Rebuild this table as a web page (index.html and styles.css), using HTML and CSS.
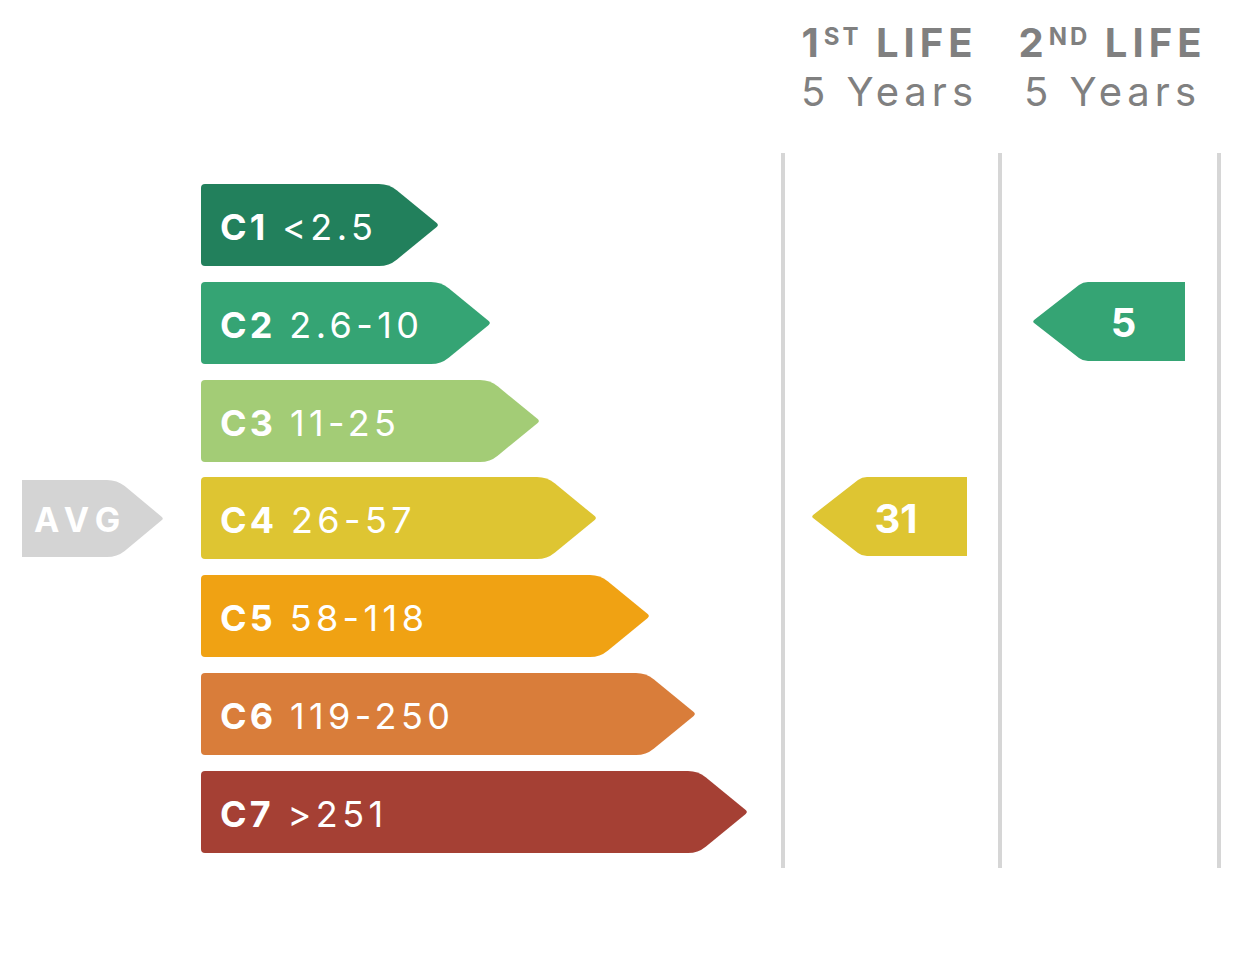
FILE: index.html
```html
<!DOCTYPE html>
<html lang="en">
<head>
<meta charset="utf-8">
<title>Energy classes</title>
<link rel="stylesheet" href="styles.css">
</head>
<body>
<div class="board">
  <div class="scale">
    <div class="avg">
      <svg class="avg-shape" viewBox="0 0 142 77" preserveAspectRatio="none"><path d="M0,0 H85 Q95,0 102.7,6.1 L139.6,36.7 Q142,38.5 139.6,40.3 L102.7,70.9 Q95,77 85,77 H0 Z"/></svg>
      <span class="avg-text">AVG</span>
    </div>
    <div class="bar c1"><div class="bar-body"><b>C1</b><span class="range">&lt;2.5</span></div><svg class="head" viewBox="0 0 62 82" preserveAspectRatio="none"><path d="M0,0 H2 Q12,0 19.7,6.3 L59.7,39.1 Q62,41 59.7,42.9 L19.7,75.7 Q12,82 2,82 H0 Z"/></svg></div>
    <div class="bar c2"><div class="bar-body"><b>C2</b><span class="range">2.6-10</span></div><svg class="head" viewBox="0 0 62 82" preserveAspectRatio="none"><path d="M0,0 H2 Q12,0 19.7,6.3 L59.7,39.1 Q62,41 59.7,42.9 L19.7,75.7 Q12,82 2,82 H0 Z"/></svg></div>
    <div class="bar c3"><div class="bar-body"><b>C3</b><span class="range">11-25</span></div><svg class="head" viewBox="0 0 62 82" preserveAspectRatio="none"><path d="M0,0 H2 Q12,0 19.7,6.3 L59.7,39.1 Q62,41 59.7,42.9 L19.7,75.7 Q12,82 2,82 H0 Z"/></svg></div>
    <div class="bar c4"><div class="bar-body"><b>C4</b><span class="range">26-57</span></div><svg class="head" viewBox="0 0 62 82" preserveAspectRatio="none"><path d="M0,0 H2 Q12,0 19.7,6.3 L59.7,39.1 Q62,41 59.7,42.9 L19.7,75.7 Q12,82 2,82 H0 Z"/></svg></div>
    <div class="bar c5"><div class="bar-body"><b>C5</b><span class="range">58-118</span></div><svg class="head" viewBox="0 0 62 82" preserveAspectRatio="none"><path d="M0,0 H2 Q12,0 19.7,6.3 L59.7,39.1 Q62,41 59.7,42.9 L19.7,75.7 Q12,82 2,82 H0 Z"/></svg></div>
    <div class="bar c6"><div class="bar-body"><b>C6</b><span class="range">119-250</span></div><svg class="head" viewBox="0 0 62 82" preserveAspectRatio="none"><path d="M0,0 H2 Q12,0 19.7,6.3 L59.7,39.1 Q62,41 59.7,42.9 L19.7,75.7 Q12,82 2,82 H0 Z"/></svg></div>
    <div class="bar c7"><div class="bar-body"><b>C7</b><span class="range">&gt;251</span></div><svg class="head" viewBox="0 0 62 82" preserveAspectRatio="none"><path d="M0,0 H2 Q12,0 19.7,6.3 L59.7,39.1 Q62,41 59.7,42.9 L19.7,75.7 Q12,82 2,82 H0 Z"/></svg></div>
  </div>

  <div class="life life-first">
    <div class="life-head">
      <div class="life-title">1<sup>ST</sup> LIFE</div>
      <div class="life-years">5 Years</div>
    </div>
    <div class="life-body">
      <div class="pointer p-c4">
        <svg class="pointer-shape" viewBox="0 0 156 79" preserveAspectRatio="none"><path d="M156,0 V79 H56 Q51,79 47,75.9 L2.4,41.3 Q0,39.5 2.4,37.7 L47,3.1 Q51,0 56,0 Z"/></svg>
        <span class="pointer-text">31</span>
      </div>
    </div>
  </div>

  <div class="life life-second">
    <div class="life-head">
      <div class="life-title">2<sup>ND</sup> LIFE</div>
      <div class="life-years">5 Years</div>
    </div>
    <div class="life-body">
      <div class="pointer p-c2">
        <svg class="pointer-shape" viewBox="0 0 153 79" preserveAspectRatio="none"><path d="M153,0 V79 H56 Q51,79 47,75.9 L2.4,41.3 Q0,39.5 2.4,37.7 L47,3.1 Q51,0 56,0 Z"/></svg>
        <span class="pointer-text">5</span>
      </div>
    </div>
  </div>
</div>
</body>
</html>
```

FILE: styles.css
```css
html, body {
  margin: 0;
  padding: 0;
  background: #ffffff;
}

body {
  font-family: Inter, "Liberation Sans", sans-serif;
  width: 1258px;
  height: 964px;
  overflow: hidden;
}

.board {
  display: flex;
  align-items: flex-start;
}

/* ---------- scale (left) ---------- */
.scale {
  width: 781px;
  box-sizing: border-box;
  padding: 184px 0 0 22px;
  display: grid;
  grid-template-columns: 142px 1fr;
  grid-template-rows: repeat(7, 82px);
  column-gap: 37px;
  row-gap: 15.8px;
}

.bar {
  grid-column: 2;
  display: flex;
  height: 82px;
}

.c1 { grid-row: 1; --c: #22805c; }
.c2 { grid-row: 2; --c: #35a474; }
.c3 { grid-row: 3; --c: #a3cc76; }
.c4 { grid-row: 4; --c: #dec532; }
.c5 { grid-row: 5; --c: #f0a213; }
.c6 { grid-row: 6; --c: #d97d3a; }
.c7 { grid-row: 7; --c: #a54034; }

.c1 .bar-body { width: 177px; }
.c2 .bar-body { width: 229px; }
.c3 .bar-body { width: 278px; }
.c4 .bar-body { width: 335px; }
.c5 .bar-body { width: 388px; }
.c6 .bar-body { width: 434px; }
.c7 .bar-body { width: 486px; }

.bar-body {
  box-sizing: border-box;
  background: var(--c);
  border-radius: 4px 0 0 4px;
  display: flex;
  align-items: center;
  padding: 4px 0 0 19px;
  color: #ffffff;
  font-size: 36px;
  white-space: nowrap;
  overflow: visible;
}

.bar-body b {
  font-weight: 700;
  letter-spacing: 3px;
  margin-right: 14px;
}

.range {
  font-weight: 400;
  letter-spacing: 4.4px;
}

.head {
  width: 62px;
  height: 82px;
  margin-left: -1px;
  fill: var(--c);
  flex: none;
}

.avg {
  grid-column: 1;
  grid-row: 4;
  align-self: center;
  display: grid;
  width: 142px;
  height: 77px;
}

.avg > * {
  grid-area: 1 / 1;
}

.avg-shape {
  width: 142px;
  height: 77px;
  fill: #d4d4d4;
}

.avg-text {
  align-self: center;
  padding: 2px 0 0 12px;
  color: #ffffff;
  font-weight: 700;
  font-size: 34px;
  letter-spacing: 7px;
}

/* ---------- life columns ---------- */
.life {
  display: flex;
  flex-direction: column;
}

.life-first { width: 217px; }
.life-second { width: 223px; }

.life-head {
  height: 153px;
  box-sizing: border-box;
  padding-top: 18px;
  text-align: center;
  color: #808080;
  font-size: 40px;
  line-height: 49px;
  white-space: nowrap;
}

.life-second .life-head {
  padding-left: 6px;
}

.life-title {
  font-weight: 700;
  letter-spacing: 5px;
}

.life-title sup {
  font-size: 24px;
  line-height: 0;
  vertical-align: 12px;
  letter-spacing: 3px;
}

.life-years {
  font-weight: 400;
  letter-spacing: 5px;
}

.life-body {
  box-sizing: border-box;
  height: 715px;
  border-left: 4px solid #d6d6d6;
  padding: 31px 0 0 0;
  display: grid;
  grid-template-rows: repeat(7, 82px);
  row-gap: 15.8px;
}

.life-second .life-body {
  border-right: 4px solid #d6d6d6;
}

.pointer {
  display: grid;
  justify-self: end;
  align-self: start;
  height: 79px;
}

.pointer > * {
  grid-area: 1 / 1;
}

.pointer-shape {
  height: 79px;
}

.p-c4 {
  grid-row: 4;
  width: 156px;
  margin-right: 31px;
}

.p-c2 {
  grid-row: 2;
  width: 153px;
  margin-right: 32px;
}

.p-c4 .pointer-shape { width: 156px; fill: #dec532; }
.p-c2 .pointer-shape { width: 153px; fill: #35a474; }

.pointer-text {
  align-self: center;
  text-align: center;
  padding: 3px 0 0 14px;
  color: #ffffff;
  font-weight: 700;
  font-size: 40px;
}

.p-c2 .pointer-text {
  padding-left: 30px;
}
```
